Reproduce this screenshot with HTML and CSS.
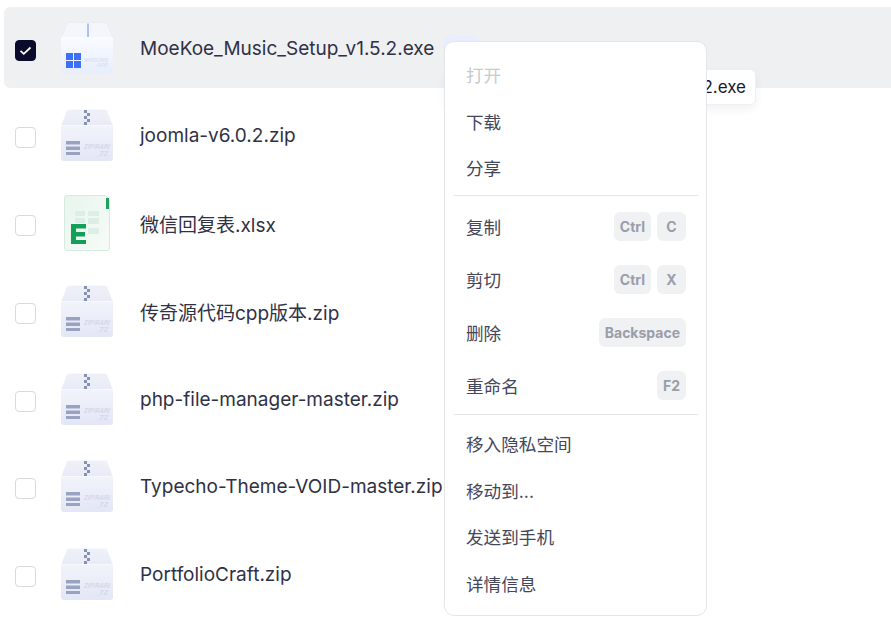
FILE: index.html
```html
<!DOCTYPE html>
<html lang="zh-CN">
<head>
<meta charset="utf-8">
<title>Files</title>
<link rel="stylesheet" href="styles.css">
</head>
<body>
<svg class="defs" width="0" height="0" aria-hidden="true">
  <defs>
    <linearGradient id="zipBody" x1="0" y1="0" x2="0" y2="1"><stop offset="0" stop-color="#f2f4fb"/><stop offset="1" stop-color="#e3e6f5"/></linearGradient>
    <linearGradient id="zipLid" x1="0" y1="0" x2="0" y2="1"><stop offset="0" stop-color="#eff1f9"/><stop offset="1" stop-color="#e8ebf6"/></linearGradient>
    <linearGradient id="exeBody" x1="0" y1="0" x2="0" y2="1"><stop offset="0" stop-color="#fafbff"/><stop offset="1" stop-color="#e6edfc"/></linearGradient>
    <linearGradient id="xlsBody" x1="0" y1="0" x2="1" y2="1"><stop offset="0" stop-color="#e9f5ee"/><stop offset="1" stop-color="#f6fbf8"/></linearGradient>
    <symbol id="zip" viewBox="0 0 52 52">
      <path d="M6 1.500Q6.500 .5 8 .5H44Q45.500 .5 46 1.500L52 17H0Z" fill="url(#zipLid)"/>
      <path d="M0 16H52V49Q52 52 49 52H3Q0 52 0 49Z" fill="url(#zipBody)"/>
      <path d="M0 16.500H52" stroke="#f8f9fd" stroke-width="1"/>
      <path d="M23 1h3v3h-3zM26 4h3v3h-3zM23 7h3v3h-3zM26 10h3v3h-3zM23 13h3v3h-3z" fill="#8791b4"/>
      <path d="M5 32h14v3.500H5zM5 37.500h14V41H5zM5 43h14v3H5z" fill="#99a2c1"/>
      <text class="icon-label" x="49" y="40" text-anchor="end" textLength="26" lengthAdjust="spacingAndGlyphs">ZIP/RAR/</text>
      <text class="icon-label" x="47" y="46.500" text-anchor="end">_7Z</text>
    </symbol>
  </defs>
</svg>

<ul class="list">
  <li class="row row-selected">
    <span class="check check-on"><svg viewBox="0 0 21 21" width="21" height="21"><path d="M5.500 10.800l3.300 3 6.700-6.300" fill="none" stroke="#fff" stroke-width="1.800"/></svg></span>
    <svg class="file-icon" viewBox="0 0 52 52" width="52" height="52">
      <path d="M6 1.500Q6.500 .5 8 .5H44Q45.500 .5 46 1.500L52 16H0Z" fill="#f5f6fb" stroke="#e6e9f3" stroke-width=".6"/>
      <path d="M0 15H52V49Q52 52 49 52H3Q0 52 0 49Z" fill="url(#exeBody)"/>
      <path d="M26 1.500h2V15h-2z" fill="#a9c3f7"/>
      <path d="M5 31h7v7H5zM13 31h7v7h-7zM5 39h7v7H5zM13 39h7v7h-7z" fill="#3a70fb"/>
      <text class="icon-label icon-label-exe" x="47" y="40" text-anchor="end" textLength="24" lengthAdjust="spacingAndGlyphs">WINDOWS</text>
      <text class="icon-label icon-label-exe" x="47" y="45" text-anchor="end">APP</text>
    </svg>
    <span class="name">MoeKoe_Music_Setup_v1.5.2.exe</span>
  </li>
  <li class="row">
    <span class="check"></span>
    <svg class="file-icon" width="52" height="52"><use href="#zip"/></svg>
    <span class="name">joomla-v6.0.2.zip</span>
  </li>
  <li class="row">
    <span class="check"></span>
    <svg class="file-icon" viewBox="0 0 52 56" width="52" height="56">
      <path d="M3.500 2.500Q3.500 .5 6 .5H44.500L48.500 4.500V53Q48.500 55.500 46 55.500H6Q3.500 55.500 3.500 53Z" fill="url(#xlsBody)" stroke="#d4ebdd"/>
      <path d="M45 3h3v11h-3z" fill="#1ea35f"/>
      <path d="M14 16h10v5H14zM27 16h11v5H27zM14 23h10v5H14zM27 23h11v6H27zM27 33h11v6H27z" fill="#dcefe4"/>
      <path d="M10 29h15v4.500H15v3.500h9v4.500h-9v3.500h10V49H10Z" fill="#12a058"/>
    </svg>
    <span class="name">微信回复表.xlsx</span>
  </li>
  <li class="row">
    <span class="check"></span>
    <svg class="file-icon" width="52" height="52"><use href="#zip"/></svg>
    <span class="name">传奇源代码cpp版本.zip</span>
  </li>
  <li class="row">
    <span class="check"></span>
    <svg class="file-icon" width="52" height="52"><use href="#zip"/></svg>
    <span class="name">php-file-manager-master.zip</span>
  </li>
  <li class="row">
    <span class="check"></span>
    <svg class="file-icon" width="52" height="52"><use href="#zip"/></svg>
    <span class="name">Typecho-Theme-VOID-master.zip</span>
  </li>
  <li class="row">
    <span class="check"></span>
    <svg class="file-icon" width="52" height="52"><use href="#zip"/></svg>
    <span class="name">PortfolioCraft.zip</span>
  </li>
</ul>

<div class="chip"></div>
<div class="tooltip">MoeKoe_Music_Setup_v1.5.2.exe</div>

<div class="menu">
  <div class="item item-disabled">打开</div>
  <div class="item">下载</div>
  <div class="item">分享</div>
  <div class="sep sep-a"></div>
  <div class="item item-keys"><span>复制</span><span class="keys"><kbd>Ctrl</kbd><kbd>C</kbd></span></div>
  <div class="item item-keys"><span>剪切</span><span class="keys"><kbd>Ctrl</kbd><kbd>X</kbd></span></div>
  <div class="item item-keys"><span>删除</span><span class="keys"><kbd>Backspace</kbd></span></div>
  <div class="item item-keys"><span>重命名</span><span class="keys"><kbd>F2</kbd></span></div>
  <div class="sep sep-b"></div>
  <div class="item">移入隐私空间</div>
  <div class="item">移动到...</div>
  <div class="item">发送到手机</div>
  <div class="item">详情信息</div>
</div>
</body>
</html>
```
FILE: styles.css
```css
* { box-sizing: border-box; }
html, body { margin: 0; height: 100%; overflow: hidden; }
body {
  background: #fff;
  color: #2f3145;
  font-family: Inter, "Noto Sans CJK SC", "Liberation Sans", sans-serif;
  font-size: 19px;
  position: relative;
}
.defs { position: absolute; }
.list {
  list-style: none;
  margin: 0;
  padding: 7px 0 0 4px;
  display: flex;
  flex-direction: column;
  gap: 6.75px;
}
.row {
  height: 81px;
  display: flex;
  align-items: center;
  padding-left: 11px;
  border-radius: 6px 0 0 6px;
}
.row-selected { background: #eff0f2; }
.check {
  width: 21px;
  height: 21px;
  flex: none;
  border: 1px solid #d9dadd;
  border-radius: 4px;
  background: #fff;
  margin: 5px 25px 0 0;
}
.check-on { background: #0b0c2c; border-color: #0b0c2c; display: block; }
.check-on svg { display: block; margin: -1px; }
.file-icon { flex: none; margin-right: 27px; }
.icon-label { font: italic 700 7.500px "Liberation Sans", sans-serif; fill: #d4d8ea; }
.icon-label-exe { font-size: 5.500px; fill: #dbe1f2; }
.name { white-space: nowrap; padding-top: 1px; }
.chip {
  position: absolute;
  left: 443px;
  top: 36px;
  width: 37px;
  height: 30px;
  background: #e8eeff;
  border-radius: 8px;
}
.tooltip {
  position: absolute;
  left: 445px;
  top: 69px;
  width: 311px;
  height: 36px;
  padding-right: 9px;
  display: flex;
  align-items: center;
  justify-content: flex-end;
  background: #fff;
  color: #17192c;
  border: 1px solid #eeeff1;
  border-radius: 6px;
  box-shadow: 0 4px 10px rgba(20, 24, 50, .06);
  font-size: 17px;
  white-space: nowrap;
  overflow: hidden;
}
.menu {
  position: absolute;
  left: 444px;
  top: 41px;
  width: 263px;
  height: 575px;
  padding: 9px 8px 0 9px;
  background: #fff;
  border: 1px solid #e5e6ea;
  border-radius: 10px;
  font-size: 17.600px;
}
.item {
  height: 46.700px;
  padding: 0 12px;
  display: flex;
  align-items: center;
  justify-content: space-between;
  color: #44465a;
}
.item-disabled { color: #c9cace; }
.item-keys { height: 53px; }
.sep { height: 1px; background: #e5e6ea; }
.sep-a { margin: 3.500px 0 4px; }
.sep-b { margin: 2px 0 5.500px; }
.keys { display: flex; gap: 6px; }
kbd {
  min-width: 29px;
  height: 29px;
  padding: 0 6px;
  display: flex;
  align-items: center;
  justify-content: center;
  background: #f0f1f3;
  border-radius: 6px;
  color: #9a9dab;
  font-family: Inter, "Liberation Sans", sans-serif;
  font-size: 14px;
  font-weight: 700;
}
```
